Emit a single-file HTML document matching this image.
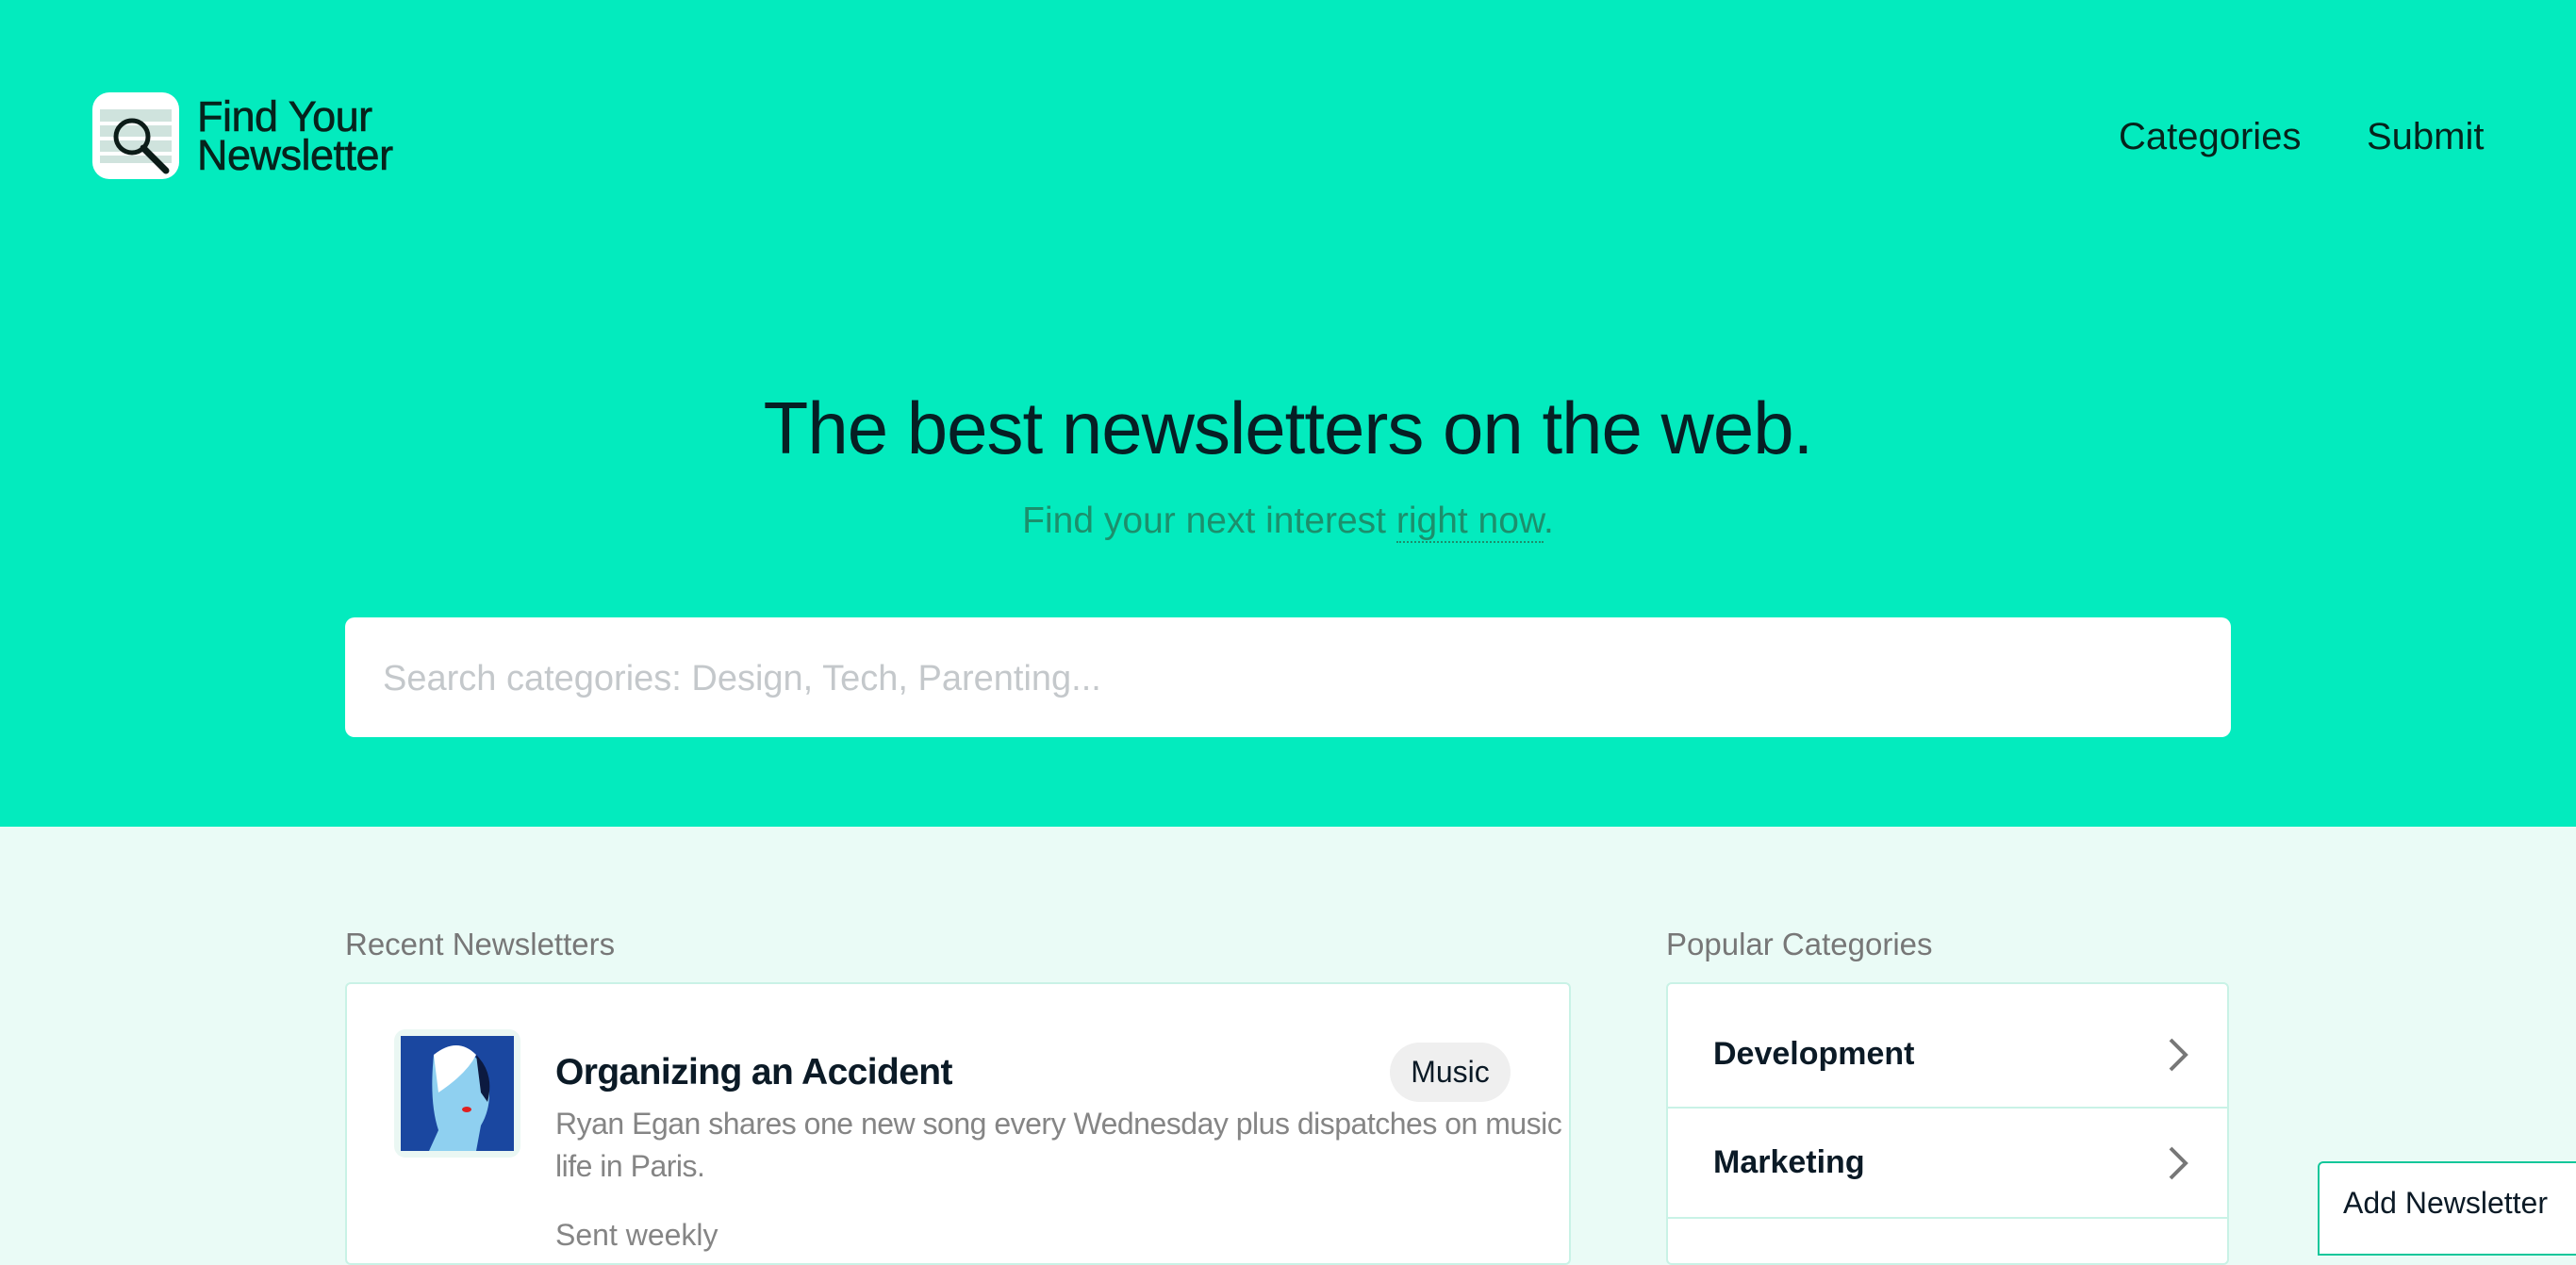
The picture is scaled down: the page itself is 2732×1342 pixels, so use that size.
<!DOCTYPE html>
<html><head><meta charset="utf-8"><style>
*{box-sizing:border-box;margin:0;padding:0}
body{width:2732px;height:1314px;overflow:hidden;font-family:"Liberation Sans",sans-serif;background:#eafbf6;position:relative;color:#0b1a26}
.hero{position:absolute;left:0;top:0;width:2732px;height:877px;background:#03ebbe}
.abs{position:absolute}
.logo{left:98px;top:98px;width:92px;height:92px;background:#fff;border-radius:18px}
.lt{left:209px;top:103px;font-size:45px;line-height:41px;color:#06231c;letter-spacing:-0.5px;-webkit-text-stroke:0.6px #06231c}
.nav{top:123px;font-size:40px;color:#06231c}
h1{position:absolute;top:409px;left:0;width:2732px;text-align:center;font-weight:400;font-size:78px;color:#061f24;letter-spacing:-1px}
.sub{top:531px;left:0;width:2732px;text-align:center;font-size:39px;color:#1c8f6c}
.sub span{border-bottom:2px dotted #1c8f6c}
.search{left:366px;top:655px;width:2000px;height:127px;background:#fff;border-radius:10px;font-size:38px;color:#c4c8cb;padding-left:40px;line-height:131px}
.lab{top:983px;font-size:33px;color:#777}
.card{left:366px;top:1042px;width:1300px;height:300px;background:#fff;border:2px solid #c9f2e6;border-radius:6px}
.cats{left:1767px;top:1042px;width:597px;height:300px;background:#fff;border:2px solid #c9f2e6;border-radius:6px}
.row{position:absolute;left:0;width:100%;border-bottom:2px solid #c9f2e6}
.row b{position:absolute;left:48px;font-size:34px}
.row svg{position:absolute;right:40px}
</style></head><body>
<div class="hero"></div>
<div class="abs logo"><svg width="92" height="92" viewBox="0 0 92 92"><rect x="8" y="18" width="76" height="13" fill="#cfe3dd"/><rect x="8" y="35" width="76" height="12" fill="#cfe3dd"/><rect x="8" y="51" width="76" height="12" fill="#cfe3dd"/><rect x="8" y="67" width="76" height="8" fill="#cfe3dd"/><circle cx="42" cy="47" r="17" fill="none" stroke="#0c1c18" stroke-width="5"/><line x1="54" y1="59" x2="78" y2="83" stroke="#0c1c18" stroke-width="7" stroke-linecap="round"/></svg></div>
<div class="abs lt">Find Your<br>Newsletter</div>
<div class="abs nav" style="left:2247px">Categories</div>
<div class="abs nav" style="left:2510px">Submit</div>
<h1>The best newsletters on the web.</h1>
<div class="abs sub">Find your next interest <span>right now</span>.</div>
<div class="abs search">Search categories: Design, Tech, Parenting...</div>
<div class="abs lab" style="left:366px">Recent Newsletters</div>
<div class="abs lab" style="left:1767px">Popular Categories</div>
<div class="abs card">
 <div class="abs" style="left:50px;top:48px;width:134px;height:136px;background:#eaf7f3;border-radius:12px;padding:7px"><svg width="120" height="122" viewBox="0 0 120 122"><rect width="120" height="122" fill="#1a47a0"/><path d="M35 20 Q70 5 90 35 Q100 70 85 95 L80 122 L30 122 L40 100 Q30 70 35 20Z" fill="#8fd0f0"/><path d="M35 20 Q60 0 80 20 Q70 40 40 60 Z" fill="#fff"/><path d="M80 20 Q100 40 92 70 L85 60 Z" fill="#0c1a40"/><ellipse cx="70" cy="78" rx="5" ry="3" fill="#e02020"/></svg></div>
 <div class="abs" style="left:221px;top:72px;font-size:39px;font-weight:700;letter-spacing:-0.6px">Organizing an Accident</div>
 <div class="abs" style="left:1106px;top:62px;width:128px;height:63px;background:#efefef;border-radius:32px;text-align:center;line-height:63px;font-size:32px">Music</div>
 <div class="abs" style="left:221px;top:126px;width:1078px;font-size:32px;line-height:45px;color:#858585;letter-spacing:-0.5px">Ryan Egan shares one new song every Wednesday plus dispatches on music life in Paris.</div>
 <div class="abs" style="left:221px;top:248px;font-size:32px;color:#858585">Sent weekly</div>
</div>
<div class="abs cats">
 <div class="row" style="top:0;height:132px"><b style="top:55px">Development</b><svg style="top:56px" width="24" height="38" viewBox="0 0 24 38"><path d="M4 3 L20 19 L4 35" fill="none" stroke="#777" stroke-width="4"/></svg></div>
 <div class="row" style="top:132px;height:117px"><b style="top:38px">Marketing</b><svg style="top:39px" width="24" height="38" viewBox="0 0 24 38"><path d="M4 3 L20 19 L4 35" fill="none" stroke="#777" stroke-width="4"/></svg></div>
</div>
<div class="abs" style="left:2458px;top:1232px;width:290px;height:100px;background:#fff;border:2px solid #13c79a;border-radius:6px 0 0 0;font-size:32px;padding:24px 0 0 25px">Add Newsletter</div>
</body></html>
